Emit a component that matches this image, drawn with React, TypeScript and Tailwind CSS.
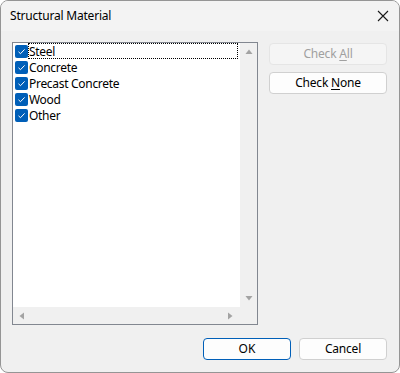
import React from "react";

const items = ["Steel", "Concrete", "Precast Concrete", "Wood", "Other"];

function Check() {
  return (
    <span className="w-[13px] h-[13px] rounded-[2px] bg-[#005fb8] flex items-center justify-center shrink-0">
      <svg width="9" height="9" viewBox="0 0 9 9">
        <path d="M1.5 4.8 L3.5 6.7 L7.6 2.4" stroke="#ffffff" strokeWidth="1" fill="none" />
      </svg>
    </span>
  );
}

function Tri({ dir }: { dir: "up" | "down" | "left" | "right" }) {
  const d =
    dir === "up"
      ? "M0.5 6 L4 1.5 L7.5 6 Z"
      : dir === "down"
      ? "M0.5 2 L4 6.5 L7.5 2 Z"
      : dir === "left"
      ? "M6 0.5 L1.5 4 L6 7.5 Z"
      : "M2 0.5 L6.5 4 L2 7.5 Z";
  return (
    <svg width="8" height="8" viewBox="0 0 8 8">
      <path d={d} fill="#a3a3a3" />
    </svg>
  );
}

export default function App() {
  return (
    <div
      className="w-[400px] h-[373px] bg-[#f0f0f0] rounded-[8px] border border-[#959595] overflow-hidden flex flex-col text-[12px] text-black"
      style={{ fontFamily: '"Noto Sans", "Segoe UI", sans-serif' }}
    >
      <div className="h-[30px] shrink-0 flex items-center justify-between pl-[9px] pr-[9px] bg-[#f3f3f3]">
        <span className="tracking-[-0.2px]">Structural Material</span>
        <svg width="12" height="12" viewBox="0 0 12 12" className="mr-[1px]">
          <path d="M1 1 L11 11 M11 1 L1 11" stroke="#1a1a1a" strokeWidth="1.1" />
        </svg>
      </div>
      <div className="flex pl-[11px] pt-[11px]">
        <div className="w-[246px] h-[283px] border border-[#828790] bg-[#f0f0f0] grid grid-cols-[227px_17px] grid-rows-[264px_17px]">
          <div className="bg-white flex flex-col">
            {items.map((it, i) => (
              <div key={it} className="h-[16px] flex items-center pl-[2px]">
                <Check />
                <span
                  className={
                    "h-[16px] flex items-center pl-[1px] pt-[2px] leading-none tracking-[-0.3px] " +
                    (i === 0 ? "w-[210px] outline outline-1 outline-dotted outline-black -outline-offset-1" : "")
                  }
                >
                  {it}
                </span>
              </div>
            ))}
          </div>
          <div className="bg-[#f0f0f0] flex flex-col items-center justify-between pt-[5px] pb-[5px]">
            <Tri dir="up" />
            <Tri dir="down" />
          </div>
          <div className="bg-[#f0f0f0] flex items-center justify-between pl-[5px] pr-[6px]">
            <Tri dir="left" />
            <Tri dir="right" />
          </div>
          <div className="bg-[#f0f0f0]" />
        </div>
        <div className="flex flex-col gap-[7px] ml-[11px] pt-[1px]">
          <button className="w-[118px] h-[22px] rounded-[4px] border border-[#e5e5e5] bg-[#f5f5f5] text-[#a0a0a0] flex items-center justify-center tracking-[-0.2px]">
            <span className="whitespace-pre">
              Check <u className="underline underline-offset-2">A</u>ll
            </span>
          </button>
          <button className="w-[118px] h-[22px] rounded-[4px] border border-[#d0d0d0] bg-[#fdfdfd] text-black flex items-center justify-center tracking-[-0.2px]">
            <span className="whitespace-pre">
              Check <u className="underline underline-offset-2">N</u>one
            </span>
          </button>
        </div>
      </div>
      <div className="flex justify-end gap-[8px] pr-[12px] mt-[13px]">
        <button className="w-[88px] h-[22px] rounded-[4px] border border-[#005fb8] bg-[#fdfdfd] flex items-center justify-center">
          OK
        </button>
        <button className="w-[88px] h-[22px] rounded-[4px] border border-[#d0d0d0] bg-[#fdfdfd] flex items-center justify-center tracking-[-0.2px]">
          Cancel
        </button>
      </div>
    </div>
  );
}
